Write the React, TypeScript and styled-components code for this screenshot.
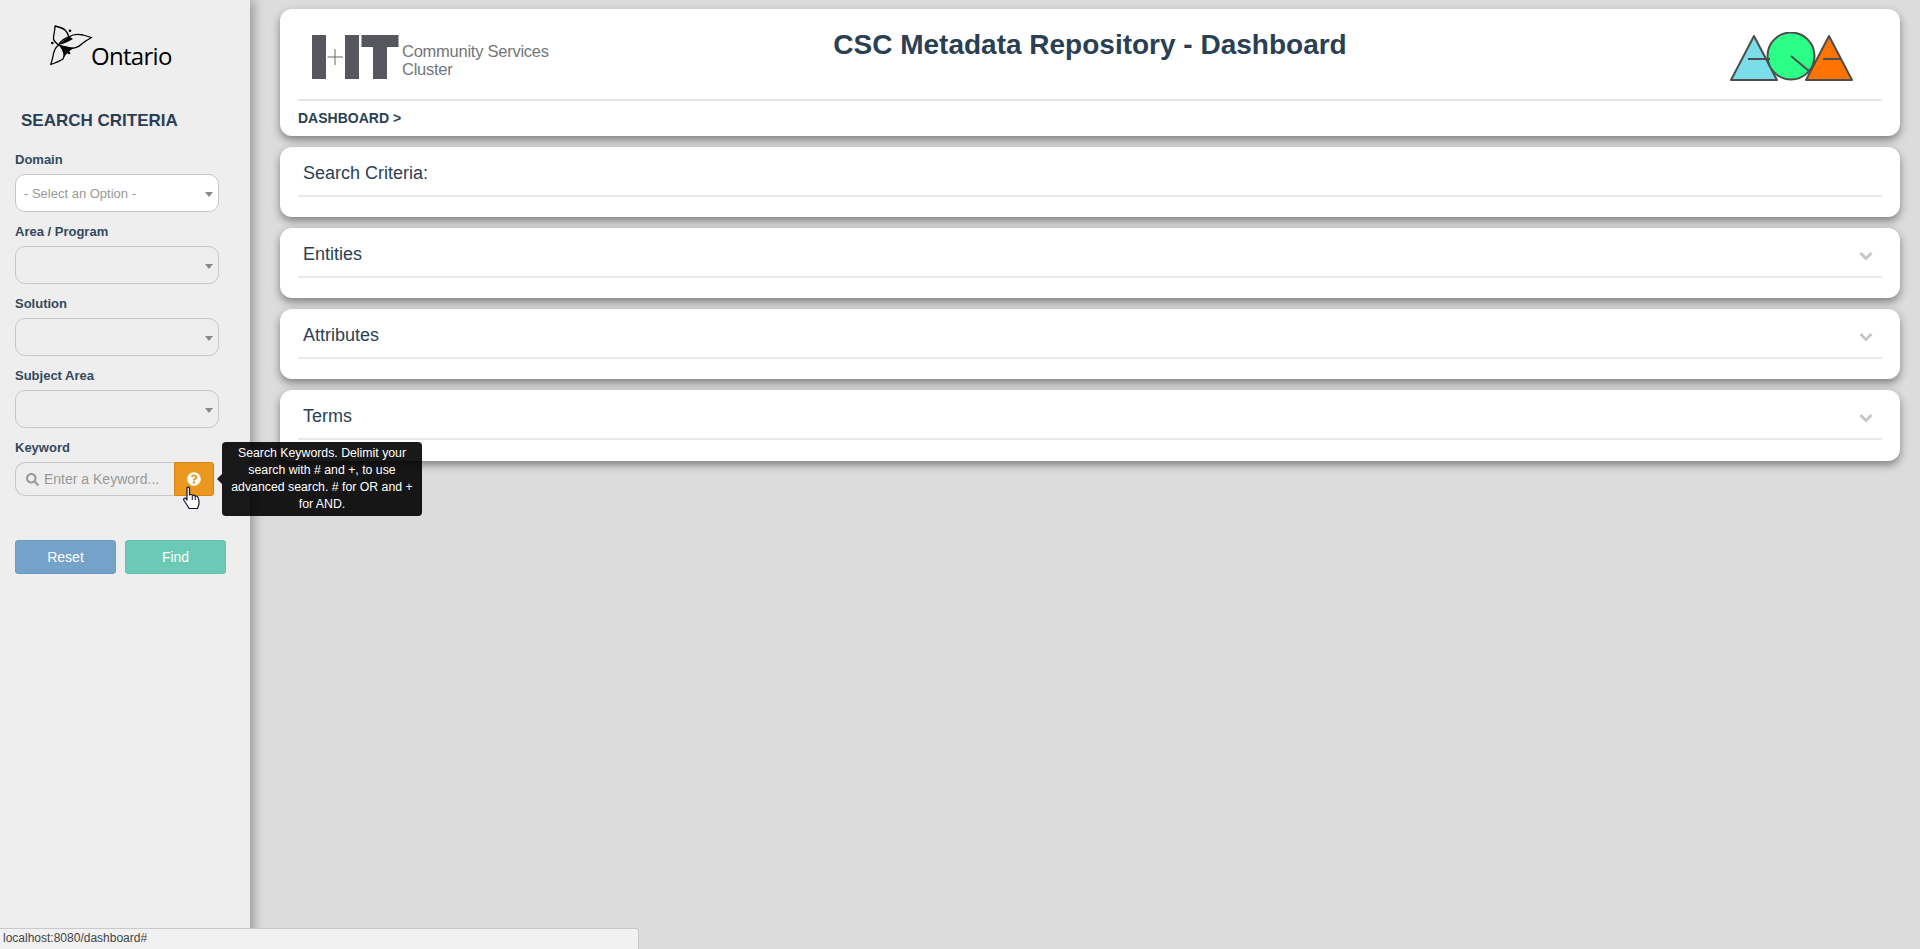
import React from "react";
import styled, { createGlobalStyle } from "styled-components";
import { FaQuestionCircle, FaSearch } from "react-icons/fa";

const Global = createGlobalStyle`
  html, body { margin: 0; padding: 0; height: 100%; overflow: hidden; }
  body { font-family: "Liberation Sans", Arial, sans-serif; background: #dcdcdc; color: #2a3f54; }
  * { box-sizing: border-box; }
`;

const Page = styled.div`
  display: flex;
  height: 949px;
  position: relative;
  background: #dcdcdc;
`;

const Sidebar = styled.aside`
  width: 250px;
  flex: none;
  background: #eeeeee;
  box-shadow: 4px 0 10px rgba(0, 0, 0, 0.3);
  padding: 26px 0 0 15px;
  position: relative;
`;

const OntarioLogo = styled.div`
  display: flex;
  align-items: flex-end;
  height: 40px;
  margin-left: 35px;
`;

const OntarioWord = styled.span`
  font-family: "Open Sans", sans-serif;
  font-size: 24px;
  line-height: 26px;
  letter-spacing: -0.7px;
  color: #000;
  margin-left: -3px;
  margin-bottom: -3px;
`;

const SideTitle = styled.h2`
  margin: 45px 0 21px 6px;
  font-size: 17px;
  line-height: 20px;
  font-weight: 700;
  color: #2a3f54;
`;

const FieldLabel = styled.label`
  display: block;
  font-size: 13px;
  line-height: 15px;
  font-weight: 700;
  color: #34495e;
`;

const Field = styled.div`
  width: 204px;
  margin-top: 12px;
`;

const SelectBox = styled.div<{ $enabled?: boolean }>`
  margin-top: 7px;
  height: 38px;
  border: 1px solid #c8c8c8;
  border-radius: 10px;
  background: ${(p) => (p.$enabled ? "#fff" : "#eeeeee")};
  font-size: 13px;
  color: #999;
  display: flex;
  align-items: center;
  padding: 0 8px;
  position: relative;
  &::after {
    content: "";
    position: absolute;
    right: 5px;
    top: 17px;
    border-style: solid;
    border-width: 5px 4px 0;
    border-color: #888 transparent transparent;
  }
`;

const KeywordRow = styled.div`
  display: flex;
  margin-top: 7px;
  width: 199px;
  height: 34px;
`;

const KeywordInput = styled.div`
  flex: 1;
  display: flex;
  align-items: center;
  gap: 5px;
  padding-left: 10px;
  border: 1px solid #c8c8c8;
  border-right: none;
  border-radius: 10px 0 0 10px;
  font-size: 14px;
  color: #999;
  svg { color: #999; width: 13px; height: 13px; }
`;

const HelpButton = styled.div`
  width: 40px;
  flex: none;
  background: #ec971f;
  border: 1px solid #d58512;
  border-radius: 0 3px 3px 0;
  display: flex;
  align-items: center;
  justify-content: center;
  color: #fff;
  padding-bottom: 1px;
  svg { width: 14px; height: 14px; }
`;

const Actions = styled.div`
  display: flex;
  gap: 9px;
  margin-top: 44px;
`;

const ActionButton = styled.button<{ $tone: "blue" | "green" }>`
  width: 101px;
  height: 34px;
  border-radius: 3px;
  font: 14px "Liberation Sans", Arial, sans-serif;
  color: #fff;
  background: ${(p) => (p.$tone === "blue" ? "#75a2c9" : "#6acab5")};
  border: 1px solid ${(p) => (p.$tone === "blue" ? "#6e9bc3" : "#64c2ae")};
  padding: 0;
`;

const Tooltip = styled.div`
  position: absolute;
  left: 222px;
  top: 442px;
  width: 200px;
  height: 74px;
  padding: 3px 8px;
  background: rgba(0, 0, 0, 0.9);
  border-radius: 4px;
  color: #fff;
  font-size: 12.3px;
  line-height: 17px;
  text-align: center;
  z-index: 5;
  &::before {
    content: "";
    position: absolute;
    left: -5px;
    top: 32px;
    border-style: solid;
    border-width: 5px 5px 5px 0;
    border-color: transparent rgba(0, 0, 0, 0.9) transparent transparent;
  }
`;

const Cursor = styled.svg`
  position: absolute;
  left: 183px;
  top: 486px;
  z-index: 6;
`;

const Main = styled.main`
  flex: 1;
  min-width: 0;
  padding: 9px 20px 0 30px;
  display: flex;
  flex-direction: column;
  gap: 11px;
`;

const Card = styled.section`
  background: #fff;
  border-radius: 12px;
  box-shadow: 0 4px 8px rgba(0, 0, 0, 0.42);
  padding: 0 18px;
`;

const HeaderTop = styled.div`
  display: grid;
  grid-template-columns: 1fr auto 1fr;
  height: 92px;
  border-bottom: 2px solid #e6e6e6;
`;

const BrandMark = styled.div`
  display: flex;
  align-items: flex-start;
  padding: 26px 0 0 14px;
`;

const BrandText = styled.div`
  margin: 7px 0 0 3px;
  font-size: 16.5px;
  line-height: 18px;
  letter-spacing: -0.25px;
  color: #74757a;
`;

const Title = styled.h1`
  margin: 0;
  padding-top: 20px;
  font-size: 28px;
  line-height: 32px;
  font-weight: 700;
  color: #2a3f54;
`;

const AoaLogo = styled.svg`
  justify-self: end;
  margin: 23px 29px 0 0;
`;

const Crumb = styled.div`
  font-size: 14px;
  line-height: 15px;
  font-weight: 700;
  color: #2a3f54;
  padding: 10px 0;
`;

const PanelHead = styled.div`
  height: 50px;
  border-bottom: 2px solid #e6e9ed;
  display: flex;
  align-items: center;
  justify-content: space-between;
  padding: 4px 9px 0 5px;
  font-size: 18px;
  color: #2a3f54;
`;

const Chevron = styled.svg`
  margin-top: 4px;
  flex: none;
`;

const Panel = styled(Card)<{ $h: number }>`
  height: ${(p) => p.$h}px;
`;

const StatusBar = styled.div`
  position: absolute;
  left: 0;
  bottom: 0;
  width: 639px;
  height: 21px;
  background: #f1f1f1;
  border-top: 1px solid #c9c9c9;
  border-right: 1px solid #c9c9c9;
  border-top-right-radius: 3px;
  padding-left: 3px;
  font-size: 12px;
  line-height: 19px;
  color: #444;
  z-index: 7;
`;

const fields = ["Area / Program", "Solution", "Subject Area"];

const Trillium = () => (
  <svg width="44" height="41" viewBox="0 0 44 41" style={{ flex: "none" }}>
    <g fill="none" stroke="#000" strokeWidth="1.3" strokeLinejoin="round">
      <path d="M5 1 C9 2 13 3 15 5 C17 7 18 9 19 12 C15 13 11 16 8.500 20 C6 18 4 16 3.500 14 C3.500 9 5 6 5 1 Z" />
      <path d="M19 12 C23 9 28 9 33 10 L41.500 12.500 C37 15 34 17 31 19.500 C28 22.500 24 23.500 20 23 C16 22 12 21 8.500 20" />
      <path d="M8.500 20 C5 23 3.500 27 3 31 C2.500 34 1.500 37 0.800 39.500 C5 38 10 36 13 34 C15 30 15.500 27 16 23" />
    </g>
    <path d="M8.500 20 C12 17 16 13 20 12 L23 14 C19 16 14 19 8.500 20 Z" fill="#000" />
    <path d="M8.500 20 C12 21 18 22 24 23 C20 25 17 28 13.500 33 C14 28 12 24 8.500 20 Z" fill="#000" />
    <circle cx="20" cy="5.700" r="1.300" fill="#000" />
    <circle cx="2.300" cy="18" r="1.300" fill="#000" />
    <circle cx="19" cy="28" r="1.300" fill="#000" />
  </svg>
);

const HitMark = () => (
  <svg width="87" height="44" viewBox="0 0 87 44" style={{ flex: "none" }}>
    <g fill="#55565e">
      <rect x="0" y="0" width="14" height="44" />
      <rect x="33" y="0" width="14" height="44" />
      <rect x="49.500" y="0" width="37" height="12" />
      <rect x="61" y="0" width="14" height="44" />
    </g>
    <path d="M15.500 22 H31 M23 14 V30" stroke="#66676e" strokeWidth="1" />
  </svg>
);

const Aoa = () => (
  <AoaLogo width="124" height="50" viewBox="0 0 124 50">
    <g stroke="#4d4d4d" strokeWidth="2" strokeLinejoin="round">
      <path d="M25 4 L2 48 L48 48 Z" fill="#7bdcea" />
      <path d="M100 4 L77 48 L123 48 Z" fill="#ff7300" />
      <circle cx="62" cy="24" r="23.500" fill="#2bff85" />
      <path d="M62 24 L80 39 M19 27 H41 M94 27 H112" fill="none" />
    </g>
  </AoaLogo>
);

const Hand = () => (
  <Cursor width="18" height="24" viewBox="0 0 18 24">
    <path
      d="M4 2 C4 0.800 6.500 0.800 6.500 2 L6.500 9 C7.500 8.200 9 8.400 9.300 9.400 C10.300 8.800 11.800 9 12.200 10.200 C13.200 9.800 14.800 10.200 15 11.500 C16 14 16.500 17 15.500 19.500 L14.500 22.500 L6 22.500 C5 20 3 17.500 1 14.500 C0 13 1.800 11.500 3 12.500 L4 14 Z"
      fill="#fff"
      stroke="#11162b"
      strokeWidth="1.200"
      strokeLinejoin="round"
    />
    <path d="M9.300 9.500 V14 M12.200 10.300 V14" stroke="#11162b" strokeWidth="1" />
  </Cursor>
);

const PanelChevron = () => (
  <Chevron width="14" height="10" viewBox="0 0 14 10">
    <path d="M1.500 2 L7 7.500 L12.500 2" fill="none" stroke="#c5c7cb" strokeWidth="3" />
  </Chevron>
);

export default function App() {
  return (
    <Page>
      <Global />
      <Sidebar>
        <OntarioLogo>
          <Trillium />
          <OntarioWord>Ontario</OntarioWord>
        </OntarioLogo>
        <SideTitle>SEARCH CRITERIA</SideTitle>
        <Field>
          <FieldLabel>Domain</FieldLabel>
          <SelectBox $enabled>- Select an Option -</SelectBox>
        </Field>
        {fields.map((f) => (
          <Field key={f}>
            <FieldLabel>{f}</FieldLabel>
            <SelectBox />
          </Field>
        ))}
        <Field>
          <FieldLabel>Keyword</FieldLabel>
          <KeywordRow>
            <KeywordInput>
              <FaSearch />
              Enter a Keyword...
            </KeywordInput>
            <HelpButton>
              <FaQuestionCircle />
            </HelpButton>
          </KeywordRow>
        </Field>
        <Actions>
          <ActionButton $tone="blue">Reset</ActionButton>
          <ActionButton $tone="green">Find</ActionButton>
        </Actions>
      </Sidebar>
      <Main>
        <Card>
          <HeaderTop>
            <BrandMark>
              <HitMark />
              <BrandText>
                Community Services
                <br />
                Cluster
              </BrandText>
            </BrandMark>
            <Title>CSC Metadata Repository - Dashboard</Title>
            <Aoa />
          </HeaderTop>
          <Crumb>DASHBOARD &gt;</Crumb>
        </Card>
        <Panel $h={70}>
          <PanelHead>Search Criteria:</PanelHead>
        </Panel>
        <Panel $h={70}>
          <PanelHead>
            Entities
            <PanelChevron />
          </PanelHead>
        </Panel>
        <Panel $h={70}>
          <PanelHead>
            Attributes
            <PanelChevron />
          </PanelHead>
        </Panel>
        <Panel $h={71}>
          <PanelHead>
            Terms
            <PanelChevron />
          </PanelHead>
        </Panel>
      </Main>
      <Tooltip>Search Keywords. Delimit your search with # and +, to use advanced search. # for OR and + for AND.</Tooltip>
      <Hand />
      <StatusBar>localhost:8080/dashboard#</StatusBar>
    </Page>
  );
}
